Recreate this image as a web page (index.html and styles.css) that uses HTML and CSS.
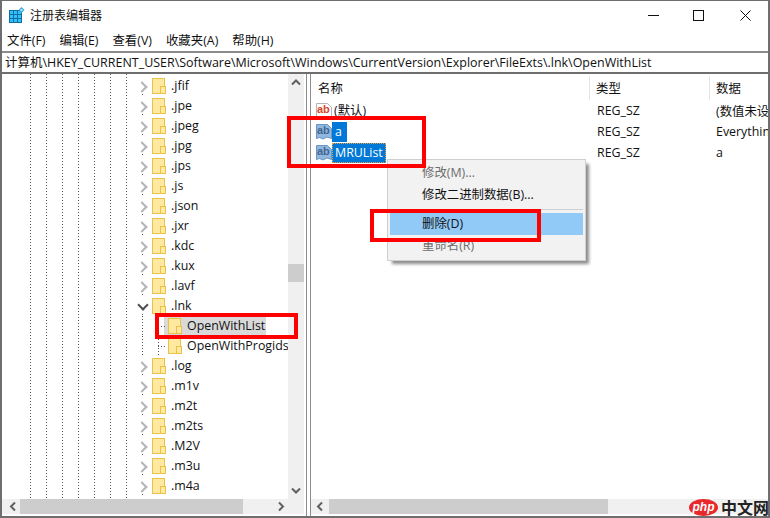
FILE: index.html
```html
<!DOCTYPE html>
<html lang="zh-CN">
<head>
<meta charset="utf-8">
<title>注册表编辑器</title>
<link rel="stylesheet" href="styles.css">
</head>
<body>
<div class="window">
  <header class="titlebar">
    <svg class="app-icon" width="16" height="16" viewBox="0 0 16 16"><rect x="0" y="3" width="13" height="13" fill="#0e6fa8"/><g fill="#35c0f5"><rect x="1" y="4" width="3" height="3"/><rect x="5" y="4" width="3" height="3"/><rect x="9" y="4" width="3" height="3"/><rect x="1" y="8" width="3" height="3"/><rect x="5" y="8" width="3" height="3"/><rect x="9" y="8" width="3" height="3"/><rect x="1" y="12" width="3" height="3"/><rect x="5" y="12" width="3" height="3"/><rect x="9" y="12" width="3" height="3"/></g><path d="M12.5 0 L15.5 3 L12.5 6 L9.5 3 Z" fill="#3aa7dc"/><rect x="11.5" y="2" width="2" height="2" fill="#bfe8fa"/></svg>
    <span class="title">注册表编辑器</span>
    <div class="controls">
      <svg class="ctl ctl-min" width="11" height="11" viewBox="0 0 11 11"><path d="M0 5.5H11" stroke="#111" fill="none"/></svg>
      <svg class="ctl ctl-max" width="11" height="11" viewBox="0 0 11 11"><rect x=".5" y=".5" width="10" height="10" stroke="#111" fill="none"/></svg>
      <svg class="ctl ctl-close" width="11" height="11" viewBox="0 0 11 11"><path d="M.5.5L10.5 10.5M10.5.5L.5 10.5" stroke="#111" fill="none"/></svg>
    </div>
  </header>
  <nav class="menubar">
    <span>文件(F)</span><span>编辑(E)</span><span>查看(V)</span><span>收藏夹(A)</span><span>帮助(H)</span>
  </nav>
  <div class="address">计算机\HKEY_CURRENT_USER\Software\Microsoft\Windows\CurrentVersion\Explorer\FileExts\.lnk\OpenWithList</div>
  <main class="panes">
    <section class="tree-pane">
      <div class="tree-top">
        <ul class="tree">
          <li class="row"><i class="exp"></i><i class="folder"></i><span>.jfif</span></li>
          <li class="row"><i class="exp"></i><i class="folder"></i><span>.jpe</span></li>
          <li class="row"><i class="exp"></i><i class="folder"></i><span>.jpeg</span></li>
          <li class="row"><i class="exp"></i><i class="folder"></i><span>.jpg</span></li>
          <li class="row"><i class="exp"></i><i class="folder"></i><span>.jps</span></li>
          <li class="row"><i class="exp"></i><i class="folder"></i><span>.js</span></li>
          <li class="row"><i class="exp"></i><i class="folder"></i><span>.json</span></li>
          <li class="row"><i class="exp"></i><i class="folder"></i><span>.jxr</span></li>
          <li class="row"><i class="exp"></i><i class="folder"></i><span>.kdc</span></li>
          <li class="row"><i class="exp"></i><i class="folder"></i><span>.kux</span></li>
          <li class="row"><i class="exp"></i><i class="folder"></i><span>.lavf</span></li>
          <li class="row"><i class="exp open"></i><i class="folder"></i><span>.lnk</span></li>
          <li class="row child current"><i class="dots"></i><i class="folder"></i><span>OpenWithList</span></li>
          <li class="row child"><i class="dots"></i><i class="folder"></i><span>OpenWithProgids</span></li>
          <li class="row"><i class="exp"></i><i class="folder"></i><span>.log</span></li>
          <li class="row"><i class="exp"></i><i class="folder"></i><span>.m1v</span></li>
          <li class="row"><i class="exp"></i><i class="folder"></i><span>.m2t</span></li>
          <li class="row"><i class="exp"></i><i class="folder"></i><span>.m2ts</span></li>
          <li class="row"><i class="exp"></i><i class="folder"></i><span>.M2V</span></li>
          <li class="row"><i class="exp"></i><i class="folder"></i><span>.m3u</span></li>
          <li class="row"><i class="exp"></i><i class="folder"></i><span>.m4a</span></li>
        </ul>
        <div class="vscroll">
          <svg width="16" height="17" viewBox="0 0 16 17"><path d="M4 10.5L8 6.5L12 10.5" stroke="#606060" stroke-width="2" fill="none"/></svg>
          <div class="vtrack"><div class="vthumb"></div></div>
          <svg width="16" height="17" viewBox="0 0 16 17"><path d="M4 6.5L8 10.5L12 6.5" stroke="#606060" stroke-width="2" fill="none"/></svg>
        </div>
      </div>
      <div class="hscroll">
        <svg class="arr" width="20" height="15" viewBox="0 0 20 15"><path d="M13 3.5L9 7.5L13 11.5" stroke="#606060" stroke-width="2" fill="none"/></svg>
        <div class="hthumb hthumb-tree"></div>
        <svg class="arr arr-end" width="20" height="15" viewBox="0 0 20 15"><path d="M7 3.5L11 7.5L7 11.5" stroke="#606060" stroke-width="2" fill="none"/></svg>
      </div>
    </section>
    <section class="list-pane">
      <div class="list-head">
        <span class="col col-name">名称</span><span class="col col-type">类型</span><span class="col col-data">数据</span>
      </div>
      <div class="list-body">
        <div class="entry">
          <div class="col col-name">
            <svg class="val-icon" width="16" height="17" viewBox="0 0 16 17"><path d="M.5 1.5H11.5L15.5 5.5V15.5H.5Z" fill="#fff" stroke="#b4b4b4"/><text x="1" y="11" class="ab ab-red">ab</text></svg>
            <span class="name">(默认)</span>
          </div>
          <span class="col col-type">REG_SZ</span><span class="col col-data">(数值未设</span>
        </div>
        <div class="entry">
          <div class="col col-name">
            <svg class="val-icon" width="16" height="17" viewBox="0 0 16 17"><path d="M.5 1.5H11.5L15.5 5.5V15.5L11 14L7 16L3.5 14.5L.5 15.5Z" fill="#8fb8e0" stroke="#6b93c4"/><text x="1" y="11" class="ab">ab</text></svg>
            <span class="name picked">a</span>
          </div>
          <span class="col col-type">REG_SZ</span><span class="col col-data">Everythin</span>
        </div>
        <div class="entry">
          <div class="col col-name">
            <svg class="val-icon" width="16" height="17" viewBox="0 0 16 17"><path d="M.5 1.5H11.5L15.5 5.5V15.5L11 14L7 16L3.5 14.5L.5 15.5Z" fill="#8fb8e0" stroke="#6b93c4"/><text x="1" y="11" class="ab">ab</text></svg>
            <span class="name picked focus">MRUList</span>
          </div>
          <span class="col col-type">REG_SZ</span><span class="col col-data">a</span>
        </div>
      </div>
      <div class="hscroll hscroll-list">
        <svg class="arr" width="18" height="15" viewBox="0 0 18 15"><path d="M11 3.5L7 7.5L11 11.5" stroke="#606060" stroke-width="2" fill="none"/></svg>
        <div class="hthumb hthumb-list"></div>
      </div>
    </section>
  </main>
</div>

<div class="menu">
  <div class="item off">修改(M)...</div>
  <div class="item">修改二进制数据(B)...</div>
  <div class="sep"></div>
  <div class="item hot">删除(D)</div>
  <div class="item off">重命名(R)</div>
</div>

<div class="mark mark-values"></div>
<div class="mark mark-delete"></div>
<div class="mark mark-key"></div>

<div class="logo"><span class="logo-php">php</span><span class="logo-cn">中文网</span></div>
</body>
</html>
```
FILE: styles.css
```css
* { box-sizing: border-box; }
html, body { margin: 0; padding: 0; }
body {
  width: 770px;
  height: 518px;
  overflow: hidden;
  position: relative;
  background: #fff;
  font-family: "Open Sans", "Noto Sans CJK SC", sans-serif;
  font-size: 12.4px;
  color: #111;
}
ul { list-style: none; margin: 0; padding: 0; }
i { display: block; font-style: normal; }

.window {
  width: 770px;
  height: 518px;
  display: flex;
  flex-direction: column;
  border: solid #6e6e6e;
  border-width: 1px 2px 2px 2px;
  background: #fff;
}

.titlebar {
  height: 29px;
  flex: none;
  display: flex;
  align-items: center;
  padding-left: 7px;
}
.app-icon { flex: none; margin-top: -1px; }
.title { margin-left: 5px; font-size: 12px; margin-top: -2px; }
.controls { margin-left: auto; display: flex; align-items: center; }
.ctl { display: block; }
.ctl-min { margin-right: 34px; }
.ctl-max { margin-right: 36px; }
.ctl-close { margin-right: 17px; }

.menubar {
  height: 21px;
  flex: none;
  display: flex;
  gap: 14px;
  padding: 0 0 2px 5px;
  align-items: center;
}

.address {
  height: 23px;
  flex: none;
  border-top: 2px solid #8c8c8c;
  border-bottom: 2px solid #6e6e6e;
  display: flex;
  align-items: center;
  padding: 0 0 2px 3px;
  white-space: nowrap;
  overflow: hidden;
  font-size: 12.47px;
}

.panes {
  flex: 1;
  min-height: 0;
  display: flex;
}

.tree-pane {
  width: 305px;
  flex: none;
  display: flex;
  flex-direction: column;
  padding-right: 2px;
  border-right: 1px solid #8c8c8c;
}
.tree-top { flex: 1; min-height: 0; display: flex; }
.tree {
  flex: 1;
  min-width: 0;
  overflow: hidden;
  padding-top: 2px;
  background-image: repeating-linear-gradient(to bottom, #555 0 1px, transparent 1px 3px);
  background-size: 1px 100%;
  background-repeat: no-repeat;
  background-position: 28px 0;
  position: relative;
}
.tree::before {
  content: "";
  position: absolute;
  left: 44px;
  top: 0;
  bottom: 0;
  width: 81px;
  background-image: repeating-linear-gradient(to bottom, #555 0 1px, transparent 1px 3px);
  background-size: 100% 100%;
  -webkit-mask-image: repeating-linear-gradient(to right, #000 0 1px, transparent 1px 16px);
  mask-image: repeating-linear-gradient(to right, #000 0 1px, transparent 1px 16px);
}
.row {
  height: 20px;
  display: flex;
  align-items: center;
  position: relative;
  padding-left: 133px;
  white-space: nowrap;
}
.row > span { margin-left: 6px; line-height: 18px; }
.exp {
  width: 17px;
  height: 20px;
  flex: none;
  position: relative;
}
.exp::before {
  content: "";
  position: absolute;
  left: 3px;
  top: 7px;
  width: 6px;
  height: 6px;
  border-top: 2px solid #b5b5b5;
  border-right: 2px solid #b5b5b5;
  transform: rotate(45deg);
}
.exp::after {
  content: "";
  position: absolute;
  left: 7px;
  top: 18px;
  width: 1px;
  height: 1px;
  background: #555;
}
.exp.open::before {
  left: 4px;
  top: 5px;
  border-color: #505050;
  transform: rotate(135deg);
}
.folder {
  width: 13px;
  height: 16px;
  flex: none;
  background: #ffe9a0;
  border: 1px solid #e8c348;
  position: relative;
}
.folder::after {
  content: "";
  position: absolute;
  right: -2px;
  bottom: -1px;
  width: 4px;
  height: 6px;
  background: #ffe9a0;
  border: 1px solid #e8c348;
}
.row.child {
  padding-left: 156px;
  background-image:
    repeating-linear-gradient(to bottom, #555 0 1px, transparent 1px 3px),
    repeating-linear-gradient(to bottom, #555 0 1px, transparent 1px 3px);
  background-size: 1px 100%, 1px 100%;
  background-position: 140px 0, 156px 0;
  background-repeat: no-repeat;
}
.row.current {
  background-image:
    repeating-linear-gradient(to bottom, #555 0 1px, transparent 1px 3px),
    linear-gradient(#d9d9d9, #d9d9d9);
  background-size: 1px 100%, 102px 100%;
  background-position: 140px 0, 162px 0;
}
.dots {
  width: 10px;
  height: 20px;
  flex: none;
  background: repeating-linear-gradient(to right, #555 0 1px, transparent 1px 3px) no-repeat 0 10px / 7px 1px;
}
.child > span { overflow: hidden; width: 101px; }

.vscroll {
  width: 16px;
  flex: none;
  display: flex;
  flex-direction: column;
  background: #f0f0f0;
}
.vscroll svg { flex: none; display: block; }
.vtrack { flex: 1; position: relative; }
.vthumb {
  position: absolute;
  left: 0;
  right: 0;
  top: 173px;
  height: 18px;
  background: #cdcdcd;
}

.hscroll {
  height: 15px;
  flex: none;
  display: flex;
  align-items: stretch;
  background: #f0f0f0;
  margin-bottom: 2px;
}
.arr { flex: none; display: block; }
.arr-end { margin-left: auto; margin-right: 12px; }
.hthumb { background: #cdcdcd; flex: none; }
.hthumb-tree { width: 223px; margin-left: -2px; }
.hthumb-list { width: 279px; }

.list-pane {
  flex: 1;
  min-width: 0;
  margin-left: 3px;
  border-left: 1px solid #8c8c8c;
  display: flex;
  flex-direction: column;
  overflow: hidden;
}
.list-head, .entry {
  display: flex;
  align-items: center;
  white-space: nowrap;
}
.list-head { height: 26px; padding-top: 2px; }
.list-body { flex: 1; min-height: 0; }
.entry { height: 21px; }
.col { flex: none; display: flex; align-items: center; }
.col-name { width: 278px; padding-left: 5px; }
.list-head .col-name { padding-left: 7px; }
.col-type { width: 120px; padding-left: 8px; }
.col-data { width: 100px; padding-left: 7px; }
.list-head .col-type, .list-head .col-data {
  border-left: 1px solid #e5e5e5;
  height: 24px;
  padding-left: 6px;
}
.val-icon { flex: none; display: block; }
.ab { font: bold 11px "Liberation Sans", sans-serif; fill: #44648f; }
.ab-red { fill: #d8452a; }
.name { margin-left: 2px; height: 20px; line-height: 20px; }
.picked { background: #0078d7; color: #fff; padding: 0 3px; margin-left: 0; min-width: 15px; }
.focus { outline: 1px dotted #e8a040; outline-offset: -1px; }

.menu {
  position: absolute;
  left: 387px;
  top: 159px;
  width: 199px;
  height: 102px;
  background: #f2f2f2;
  border: 1px solid #cfcfcf;
  box-shadow: 4px 4px 3px -1px rgba(0,0,0,.45);
  padding: 2px;
}
.item { height: 22px; line-height: 22px; padding-left: 32px; }
.off { color: #6d6d6d; }
.hot { background: #91c9f7; }
.sep { height: 1px; background: #d0d0d0; margin: 3px 0; }

.mark {
  position: absolute;
  border: 4px solid #fe0000;
}
.mark-values { left: 287px; top: 116px; width: 139px; height: 52px; }
.mark-delete { left: 370px; top: 209px; width: 171px; height: 33px; }
.mark-key { left: 155px; top: 313px; width: 143px; height: 26px; }

.logo {
  position: absolute;
  left: 689px;
  top: 499px;
  height: 17px;
  display: flex;
  align-items: center;
}
.logo-php {
  width: 29px;
  height: 17px;
  border-radius: 50%;
  background: #e8282b;
  color: #fff;
  font: italic bold 12px/16px "Liberation Sans", sans-serif;
  text-align: center;
}
.logo-cn {
  margin-left: 3px;
  font: bold 16px/17px "Noto Sans CJK SC", sans-serif;
  color: #222;
  letter-spacing: 0;
  white-space: nowrap;
}
```
